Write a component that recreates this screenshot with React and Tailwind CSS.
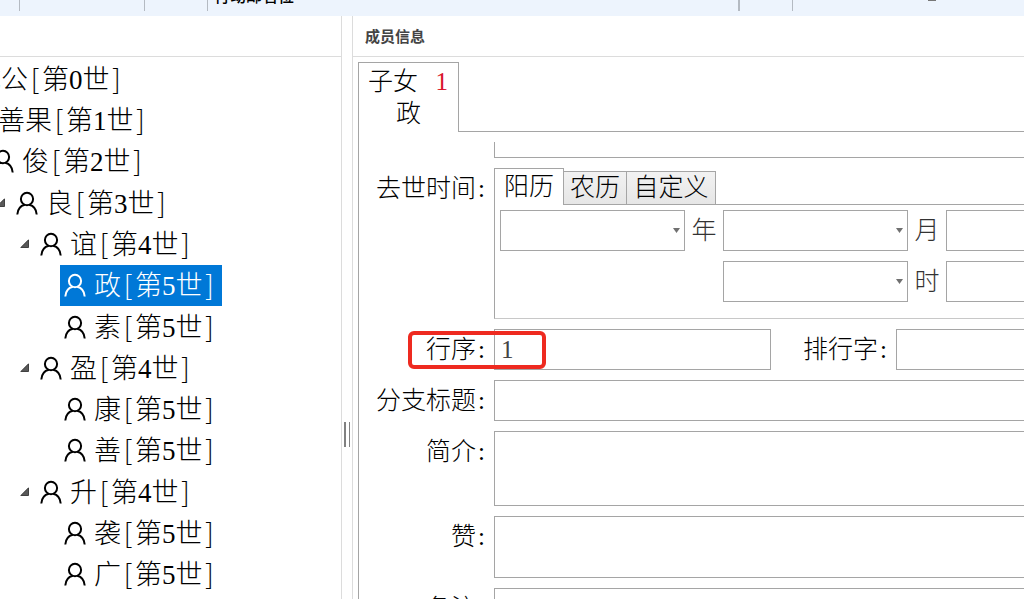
import React from "react";

const INDENTS = ["pl-6", "pl-12", "pl-18", "pl-24", "pl-30", "pl-36"];

const MEMBERS = [
  { name: "成公", level: 0, open: true },
  { name: "善果", level: 1, open: true },
  { name: "俊", level: 2, open: true },
  { name: "良", level: 3, open: true },
  { name: "谊", level: 4, open: true },
  { name: "政", level: 5, selected: true },
  { name: "素", level: 5 },
  { name: "盈", level: 4, open: true },
  { name: "康", level: 5 },
  { name: "善", level: 5 },
  { name: "升", level: 4, open: true },
  { name: "袭", level: 5 },
  { name: "广", level: 5 },
];

const BORDER = "border-[#a5a5a5]";

function PersonIcon() {
  return (
    <svg width="22" height="24" viewBox="0 0 22 24" fill="none" stroke="currentColor" strokeWidth="2" className="shrink-0" aria-hidden="true">
      <ellipse cx="11" cy="8" rx="6.100" ry="6.200" />
      <path d="M1.300 23.500c.4-5.200 3.400-8.700 7.500-9.700M20.700 23.500c-.4-5.200-3.400-8.700-7.500-9.700" />
    </svg>
  );
}

function Bracket({ children }) {
  return (
    <span className="inline-block w-[14px] text-center font-['Noto_Sans_CJK_SC',sans-serif] leading-8">{children}</span>
  );
}

function TreeRow({ member }) {
  return (
    <li role="treeitem" aria-selected={!!member.selected} className={`flex min-h-[41px] flex-1 items-stretch ${INDENTS[member.level]}`}>
      <span className="flex w-4 shrink-0 items-center">
        {member.open && (
          <svg width="9" height="9" viewBox="0 0 9 9" aria-hidden="true">
            <path d="M8.500 .8v7.700H.8z" fill="#595959" stroke="#262626" strokeWidth=".8" />
          </svg>
        )}
      </span>
      <button
        type="button"
        className={`flex items-center gap-2 pl-1 pr-[5px] whitespace-nowrap ${member.selected ? "bg-[#0078d7] text-white" : "text-black"}`}
      >
        <PersonIcon />
        <span className="text-[27px] leading-8">
          {member.name}
          <Bracket>[</Bracket>
          第{member.level}世
          <Bracket>]</Bracket>
        </span>
      </button>
    </li>
  );
}

function Label({ htmlFor, children }) {
  return (
    <label htmlFor={htmlFor} className="flex h-[41px] w-[135px] shrink-0 items-center justify-end pr-1.5 whitespace-nowrap">
      {children}
      <span className="w-3 pl-0.5">:</span>
    </label>
  );
}

function Combo({ label }) {
  return (
    <span className="relative flex h-[41px] w-[185px] shrink-0">
      <select aria-label={label} className={`w-full appearance-none border bg-white px-2 ${BORDER}`}>
        <option value=""></option>
      </select>
      <svg width="7" height="5" viewBox="0 0 7 5" className="pointer-events-none absolute top-[18px] right-[5px]" aria-hidden="true">
        <path d="M0 0h7L3.500 5z" fill="#707070" />
      </svg>
    </span>
  );
}

function DateRow({ children }) {
  return <div className="flex h-[41px] items-center">{children}</div>;
}

function Unit({ children }) {
  return <span className="w-[38px] shrink-0 text-center text-[#333]">{children}</span>;
}

function Splitter() {
  return (
    <div role="separator" aria-orientation="vertical" className="flex w-[10px] shrink-0 items-start gap-[3px] pt-[406px] pl-0.5">
      <span className="h-[25px] w-0.5 bg-[#808080]" />
      <span className="h-[25px] w-px bg-[#808080]" />
    </div>
  );
}

function Toolbar() {
  const line = "h-[11px] w-px shrink-0 bg-[#b4bac2]";
  return (
    <header className="flex h-4 shrink-0 items-start overflow-hidden bg-[#edf4fd] pl-[19px] text-black">
      <span className={line} />
      <span className="w-31 shrink-0" />
      <span className={line} />
      <span className="w-[62px] shrink-0" />
      <span className={line} />
      <div className="flex h-4 w-[530px] shrink-0 flex-col justify-end overflow-hidden pb-[11px] pl-1.5">
        <span className="font-['Noto_Sans_CJK_SC',sans-serif] text-base leading-5 font-medium">行动邮名位</span>
      </div>
      <span className="h-[11px] w-0.5 shrink-0 bg-[#b4bac2]" />
      <span className="w-13 shrink-0" />
      <span className={line} />
      <span className="flex-1" />
      <span className="mr-[88px] h-px w-2 shrink-0 bg-[#777]" />
    </header>
  );
}

export default function App() {
  return (
    <div className="flex h-screen flex-col overflow-hidden bg-white font-['Liberation_Serif','Noto_Sans_CJK_SC',serif] font-light text-black">
      <Toolbar />
      <main className="flex min-h-0 flex-1">
        <aside className="flex shrink-0 grow-0 basis-[342px] flex-col overflow-hidden border-r border-[#dcdcdc]">
          <div className="h-[41px] shrink-0 border-b border-[#dcdcdc]" />
          <ul role="tree" aria-label="世系" className="-ml-25 flex flex-1 flex-col pt-px pb-1">
            {MEMBERS.map((m, i) => (
              <TreeRow key={i} member={m} />
            ))}
          </ul>
        </aside>
        <Splitter />
        <section className="flex min-w-0 flex-1 flex-col overflow-hidden border-l border-[#dcdcdc]">
          <h1 className="flex h-[41px] shrink-0 items-center border-b border-[#dcdcdc] pl-3 font-['Noto_Sans_CJK_SC',sans-serif] text-[15px] font-bold text-[#444]">
            成员信息
          </h1>
          <div className="flex min-h-0 flex-1 flex-col pt-[5px] pl-[5px] text-[25px] leading-8">
            <div role="tablist" className="flex shrink-0">
              <button type="button" role="tab" aria-selected="true" className={`flex h-[70px] w-[101px] flex-col border-t border-r border-l pt-[3px] ${BORDER}`}>
                <span className="flex justify-between self-stretch pr-2.5 pl-[9px]">
                  子女<span className="text-[#d9142b]">1</span>
                </span>
                <span className="self-center">政</span>
              </button>
              <span className={`flex-1 border-b ${BORDER}`} />
            </div>
            <form className={`flex flex-1 flex-col gap-[10px] border-l pt-[10px] ${BORDER}`}>
              <div className="flex shrink-0 pl-[135px]">
                <span className={`h-4 flex-1 border-b border-l ${BORDER}`} />
              </div>

              <div className="flex shrink-0">
                <Label htmlFor="death-year">去世时间</Label>
                <div className="flex h-[151px] min-w-0 flex-1 flex-col">
                  <div role="tablist" className="flex h-[37px] shrink-0 items-end">
                    <button type="button" role="tab" aria-selected="true" className={`h-[37px] w-[70px] border-t border-r border-l ${BORDER}`}>
                      阳历
                    </button>
                    <button type="button" role="tab" className={`h-[34px] w-[63px] border border-l-0 bg-linear-to-b from-[#f2f2f2] to-[#e6e6e6] ${BORDER}`}>
                      农历
                    </button>
                    <button type="button" role="tab" className={`h-[34px] w-[89px] border border-l-0 bg-linear-to-b from-[#f2f2f2] to-[#e6e6e6] ${BORDER}`}>
                      自定义
                    </button>
                    <span className={`flex-1 self-stretch border-b ${BORDER}`} />
                  </div>
                  <div className="flex flex-1 flex-col gap-[10px] border-b border-l border-b-[#c8c8c8] border-l-[#a5a5a5] pt-[5px] pl-[5px]">
                    <DateRow>
                      <Combo label="年" />
                      <Unit>年</Unit>
                      <Combo label="月" />
                      <Unit>月</Unit>
                      <input id="death-year" aria-label="日" className={`h-[41px] min-w-0 flex-1 border border-r-0 px-2 ${BORDER}`} />
                    </DateRow>
                    <DateRow>
                      <span className="w-[223px] shrink-0" />
                      <Combo label="时" />
                      <Unit>时</Unit>
                      <input aria-label="分" className={`h-[41px] min-w-0 flex-1 border border-r-0 px-2 ${BORDER}`} />
                    </DateRow>
                  </div>
                </div>
              </div>

              <div className="relative flex shrink-0">
                <Label htmlFor="order">行序</Label>
                <input id="order" defaultValue="1" className={`h-[41px] w-[277px] border px-[6px] text-[#444] ${BORDER}`} />
                <label htmlFor="rank" className="flex h-[41px] w-[125px] shrink-0 items-center justify-end pr-1.5 whitespace-nowrap">
                  排行字<span className="w-3 pl-0.5">:</span>
                </label>
                <input id="rank" className={`h-[41px] min-w-0 flex-1 border border-r-0 px-2 ${BORDER}`} />
                <span className="pointer-events-none absolute top-0.5 left-[49px] h-[38px] w-[138px] rounded-md border-4 border-[#ee2a20]" />
              </div>

              <div className="flex shrink-0">
                <Label htmlFor="branch">分支标题</Label>
                <input id="branch" className={`h-[41px] min-w-0 flex-1 border border-r-0 px-2 ${BORDER}`} />
              </div>

              <div className="flex shrink-0">
                <Label htmlFor="intro">简介</Label>
                <textarea id="intro" className={`h-[75px] min-w-0 flex-1 resize-none border border-r-0 px-2 ${BORDER}`} />
              </div>

              <div className="flex shrink-0">
                <Label htmlFor="praise">赞</Label>
                <textarea id="praise" className={`h-[62px] min-w-0 flex-1 resize-none border border-r-0 px-2 ${BORDER}`} />
              </div>

              <div className="flex shrink-0">
                <Label htmlFor="remark">备注</Label>
                <textarea id="remark" className={`h-[62px] min-w-0 flex-1 resize-none border border-r-0 px-2 ${BORDER}`} />
              </div>
            </form>
          </div>
        </section>
      </main>
    </div>
  );
}
